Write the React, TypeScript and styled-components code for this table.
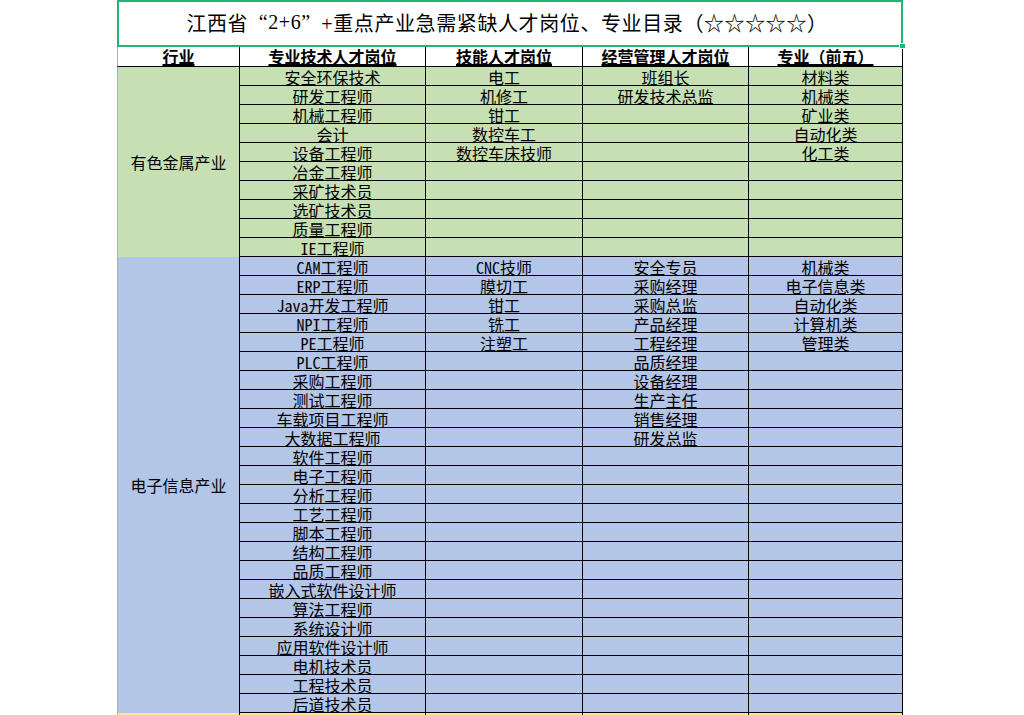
import React from "react";
import styled, { createGlobalStyle } from "styled-components";

const palette = {
    green: "#c6e0b4",
    blue: "#b4c6e7",
    yellow: "#ffe699",
    line: "#000000",
    grid: "#a5adbb",
    frame: "#21b573",
};

const COLUMNS = "123px 186px 157px 166px 154px";

const GlobalStyle = createGlobalStyle`
    html, body {
        margin: 0;
        padding: 0;
        background: #fff;
        overflow: hidden;
    }

    body {
        font-family: "Noto Sans Mono CJK SC", "Noto Sans CJK SC", sans-serif;
        color: #000;
    }

    *, *::before, *::after {
        box-sizing: border-box;
    }
`;

const Page = styled.div`
    width: 1024px;
    height: 715px;
    overflow: hidden;
    padding-left: 117px;
`;

const Sheet = styled.div`
    width: 786px;
    position: relative;
`;

const TitleBox = styled.div`
    height: 47px;
    border: 2px solid ${palette.frame};
    display: flex;
    align-items: center;
    justify-content: center;
    padding: 0 6px 2px 0;

    font-family: "Liberation Serif", "Noto Sans CJK SC", serif;
    font-size: 20px;
    letter-spacing: 0.6px;
    white-space: nowrap;
`;

// song-style fonts give the curly quotes a full em
const Quote = styled.span<{ $open?: boolean }>`
    display: inline-block;
    width: 1em;
    text-align: ${p => (p.$open ? "right" : "left")};
`;

// excel's little fill handle at the corner of the selection
const FillHandle = styled.span`
    position: absolute;
    left: 782px;
    top: 43px;
    width: 7px;
    height: 6px;
    background: ${palette.frame};
    border: 1px solid #fff;
`;

const Band = styled.div<{ $fill: string; $rows: number; $height?: number }>`
    display: grid;
    grid-template-columns: ${COLUMNS};
    grid-template-rows: repeat(${p => p.$rows}, ${p => p.$height ?? 19}px);
    background: ${p => p.$fill};
`;

const HeaderCell = styled.div<{ $first?: boolean }>`
    border-right: 1px solid ${palette.line};
    border-bottom: 1px solid ${palette.line};
    border-left: ${p => (p.$first ? `1px solid ${palette.grid}` : "none")};

    padding-top: 1px;
    font-size: 16px;
    line-height: 16px;
    font-weight: bold;
    text-align: center;
    white-space: nowrap;
    text-decoration: underline;
    text-decoration-thickness: 2px;
    text-underline-offset: 1px;
`;

const Label = styled.div<{ $rows: number }>`
    grid-column: 1;
    grid-row: 1 / span ${p => p.$rows};
    border-left: 1px solid ${palette.grid};
    border-right: 1px solid ${palette.line};

    display: flex;
    align-items: center;
    justify-content: center;
    font-size: 16px;
`;

const Cell = styled.div`
    border-right: 1px solid ${palette.line};
    border-bottom: 1px solid ${palette.line};

    padding-top: 2px;
    font-size: 16px;
    line-height: 16px;
    text-align: center;
    white-space: nowrap;
`;

type Row = [string, string, string, string];

const zip = (cols: string[][], count: number): Row[] =>
    Array.from({ length: count }, (_, i) => cols.map(c => c[i] ?? "") as Row);

const metals = zip(
    [
        ["安全环保技术", "研发工程师", "机械工程师", "会计", "设备工程师", "冶金工程师", "采矿技术员", "选矿技术员", "质量工程师", "IE工程师"],
        ["电工", "机修工", "钳工", "数控车工", "数控车床技师"],
        ["班组长", "研发技术总监"],
        ["材料类", "机械类", "矿业类", "自动化类", "化工类"],
    ],
    10
);

const electronics = zip(
    [
        [
            "CAM工程师", "ERP工程师", "Java开发工程师", "NPI工程师", "PE工程师", "PLC工程师",
            "采购工程师", "测试工程师", "车载项目工程师", "大数据工程师", "软件工程师", "电子工程师",
            "分析工程师", "工艺工程师", "脚本工程师", "结构工程师", "品质工程师", "嵌入式软件设计师",
            "算法工程师", "系统设计师", "应用软件设计师", "电机技术员", "工程技术员", "后道技术员",
        ],
        ["CNC技师", "膜切工", "钳工", "铣工", "注塑工"],
        ["安全专员", "采购经理", "采购总监", "产品经理", "工程经理", "品质经理", "设备经理", "生产主任", "销售经理", "研发总监"],
        ["机械类", "电子信息类", "自动化类", "计算机类", "管理类"],
    ],
    24
);

const headers = ["行业", "专业技术人才岗位", "技能人才岗位", "经营管理人才岗位", "专业（前五）"];

const Industry = ({ name, fill, rows }: { name: string; fill: string; rows: Row[] }) => (
    <Band $fill={fill} $rows={rows.length}>
        <Label $rows={rows.length}>{name}</Label>
        {rows.map((row, i) =>
            row.map((text, j) => (
                <Cell key={`${i}-${j}`} style={{ gridRow: i + 1, gridColumn: j + 2 }}>
                    {text}
                </Cell>
            ))
        )}
    </Band>
);

export default function App() {
    return (
        <Page>
            <GlobalStyle />
            <Sheet>
                <TitleBox>
                    江西省<Quote $open>“</Quote>2+6<Quote>”</Quote>+重点产业急需紧缺人才岗位、专业目录（☆☆☆☆☆）
                </TitleBox>
                <FillHandle />

                <Band $fill="#fff" $rows={1} $height={20}>
                    {headers.map((h, i) => (
                        <HeaderCell key={h} $first={i === 0}>{h}</HeaderCell>
                    ))}
                </Band>

                <Industry name="有色金属产业" fill={palette.green} rows={metals} />
                <Industry name="电子信息产业" fill={palette.blue} rows={electronics} />
                <Industry name="" fill={palette.yellow} rows={[["", "", "", ""]]} />
            </Sheet>
        </Page>
    );
}
